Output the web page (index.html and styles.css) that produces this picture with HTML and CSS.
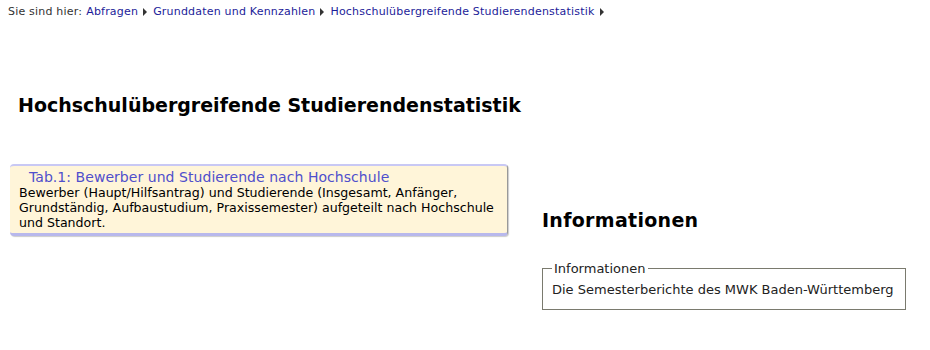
FILE: index.html
```html
<!DOCTYPE html>
<html lang="de">
<head>
<meta charset="utf-8">
<title>Hochschulübergreifende Studierendenstatistik</title>
<link rel="stylesheet" href="styles.css">
</head>
<body>
<div class="crumbs">
  <span class="here">Sie sind hier:</span>
  <a href="#">Abfragen</a><span class="arrow"></span>
  <a href="#">Grunddaten und Kennzahlen</a><span class="arrow"></span>
  <a href="#">Hochschulübergreifende Studierendenstatistik</a><span class="arrow"></span>
</div>
<div class="page">
  <div class="main">
    <h1 class="title">Hochschulübergreifende Studierendenstatistik</h1>
    <div class="card">
      <a class="card-title" href="#">Tab.1: Bewerber und Studierende nach Hochschule</a>
      <p class="card-text">Bewerber (Haupt/Hilfsantrag) und Studierende (Insgesamt, Anfänger, Grundständig, Aufbaustudium, Praxissemester) aufgeteilt nach Hochschule und Standort.</p>
    </div>
  </div>
  <div class="side">
    <h2 class="side-title">Informationen</h2>
    <fieldset class="info">
      <legend>Informationen</legend>
      <div class="info-text">Die Semesterberichte des MWK Baden-Württemberg</div>
    </fieldset>
  </div>
</div>
</body>
</html>
```
FILE: styles.css
```css
body {
  margin: 0;
  background: #fff;
  font-family: "DejaVu Sans", Verdana, sans-serif;
  color: #000;
}
.crumbs {
  padding: 5px 8px 0;
  font-size: 11px;
  line-height: 14px;
  letter-spacing: 0.2px;
  color: #333;
  display: flex;
  align-items: center;
  gap: 4px;
}
.crumbs a {
  color: #1c1c99;
  text-decoration: none;
}
.arrow {
  width: 0;
  height: 0;
  border-top: 4px solid transparent;
  border-bottom: 4px solid transparent;
  border-left: 4px solid #333;
  margin: 0 2px 0 1px;
}
.page {
  display: flex;
  gap: 34px;
  padding: 0 10px;
}
.main {
  width: 498px;
  flex: none;
}
.title {
  margin: 75px 0 0 8px;
  font-size: 19px;
  line-height: 22px;
  font-weight: bold;
  white-space: nowrap;
}
.card {
  margin-top: 48px;
  background: #fff5d9;
  border-top: 2px solid #c8c8f4;
  border-bottom: 3px solid #b8b8ec;
  border-right: 1px solid #999;
  border-radius: 4px;
  padding: 3px 6px 3px 9px;
  box-shadow: 1px 1px 1px #ccc;
}
.card-title {
  display: block;
  padding-left: 10px;
  font-size: 14px;
  line-height: 16px;
  letter-spacing: 0.05px;
  color: #4f4fcc;
  text-decoration: none;
}
.card-text {
  margin: 0;
  font-size: 12.6px;
  line-height: 15px;
}
.side {
  width: 364px;
  flex: none;
  padding-top: 190px;
}
.side-title {
  margin: 0;
  font-size: 19px;
  line-height: 22px;
  letter-spacing: 0.3px;
}
.info {
  box-sizing: border-box;
  width: 364px;
  margin: 30px 0 0;
  padding: 6px 8px 11px 9px;
  border: 1px solid #7a7a6e;
}
.info legend {
  padding: 0 2px;
  font-size: 13px;
  line-height: 15px;
  color: #222;
}
.info-text {
  font-size: 13px;
  line-height: 16px;
  color: #222;
}
```
